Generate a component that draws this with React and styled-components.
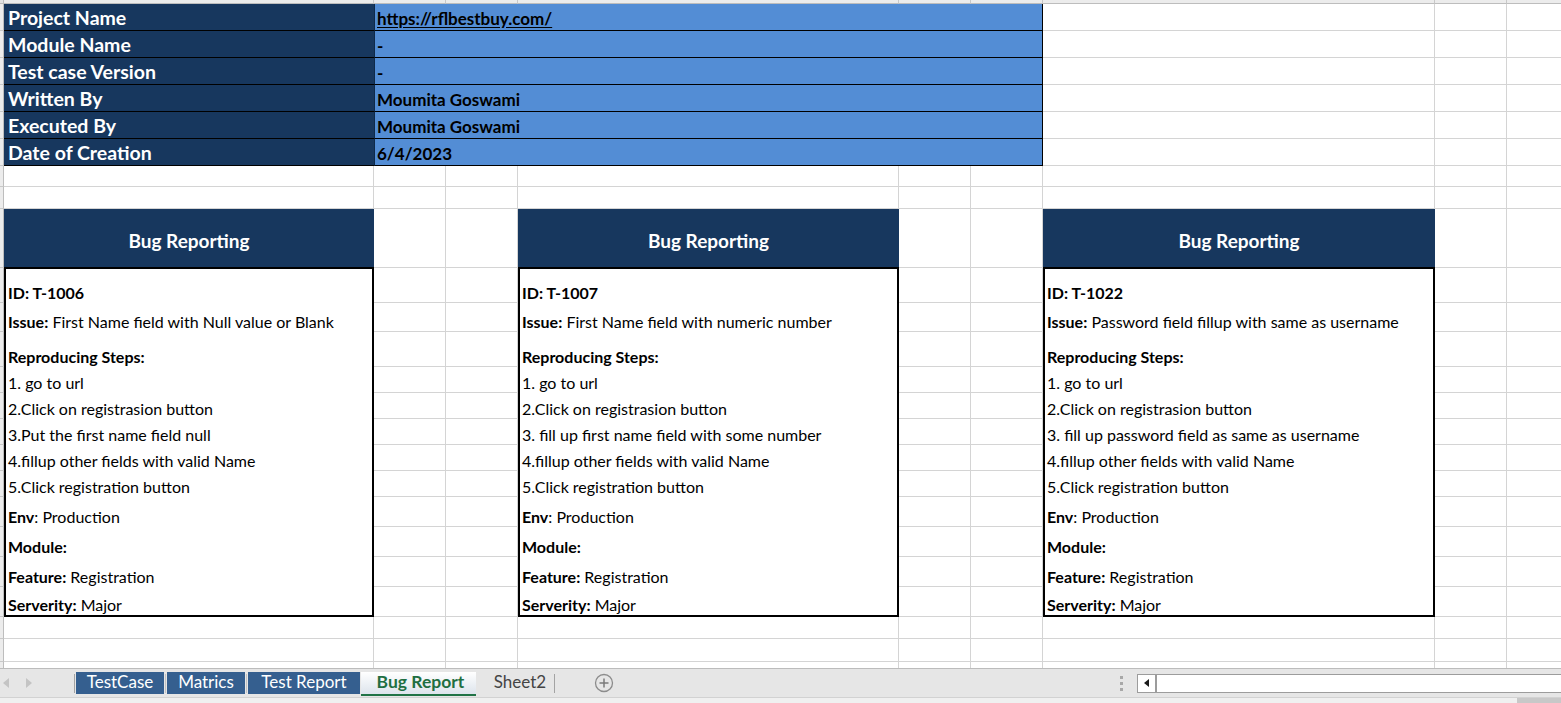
import React from 'react';
import styled, { createGlobalStyle } from 'styled-components';

const GlobalStyle = createGlobalStyle`
	html, body {
		margin: 0;
		padding: 0;
		background: #ffffff;
		font-family: Lato, 'Open Sans', sans-serif;
	}
`;

const navy = '#17375e';
const skyBlue = '#538dd5';
const gridLine = '#d4d4d4';

// column widths and row heights of the visible sheet (first is the header stub)
const colWidths = [4, 370, 72, 72, 381, 72, 72, 392, 72, 72];
const rowHeights = [4, 27, 27, 27, 27, 27, 27, 21, 22, 59, 35, 29, 35, 26, 26, 26, 26, 26, 30, 30, 30, 30, 22, 23, 23];
const gridCols = colWidths.map(w => `${w}px`).join(' ');
const gridRows = rowHeights.map(h => `${h}px`).join(' ');

const info = [
	{ label: 'Project Name', value: 'https://rflbestbuy.com/', link: true },
	{ label: 'Module Name', value: '-' },
	{ label: 'Test case Version', value: '-' },
	{ label: 'Written By', value: 'Moumita Goswami' },
	{ label: 'Executed By', value: 'Moumita Goswami' },
	{ label: 'Date of Creation', value: '6/4/2023' },
];

const bugs = [
	{
		col: 2,
		id: 'T-1006',
		issue: 'First Name field with Null value or Blank',
		steps: [
			'1. go to url',
			'2.Click on registrasion button',
			'3.Put the first name field null',
			'4.fillup other fields with valid Name',
			'5.Click registration button',
		],
	},
	{
		col: 5,
		id: 'T-1007',
		issue: 'First Name field with numeric number',
		steps: [
			'1. go to url',
			'2.Click on registrasion button',
			'3. fill up first name field with some number',
			'4.fillup other fields with valid Name',
			'5.Click registration button',
		],
	},
	{
		col: 8,
		id: 'T-1022',
		issue: 'Password field fillup with same as username',
		steps: [
			'1. go to url',
			'2.Click on registrasion button',
			'3. fill up password field as same as username',
			'4.fillup other fields with valid Name',
			'5.Click registration button',
		],
	},
];

const bodyRowHeights = [34, 29, 35, 26, 26, 26, 26, 26, 30, 30, 30, 28];

const tabs = [
	{ name: 'TestCase', w: 88 },
	{ name: 'Matrics', w: 78 },
	{ name: 'Test Report', w: 112 },
	{ name: 'Bug Report', w: 115, active: true },
	{ name: 'Sheet2', w: 76, plain: true },
];

function cellKind(r, c) {
	if (r === 0 && c === 0) return 'corner';
	if (r === 0) return 'colhead';
	if (c === 0) return 'rowhead';
	return 'cell';
}

function BugCard({ bug }) {
	const lines = [
		<Strong>ID: {bug.id}</Strong>,
		<>
			<Strong>Issue:</Strong> {bug.issue}
		</>,
		<Strong>Reproducing Steps:</Strong>,
		...bug.steps,
		<>
			<Strong>Env</Strong>: Production
		</>,
		<Strong>Module:</Strong>,
		<>
			<Strong>Feature:</Strong> Registration
		</>,
		<>
			<Strong>Serverity:</Strong> Major
		</>,
	];
	return (
		<Card $col={bug.col}>
			<CardHeader>Bug Reporting</CardHeader>
			<CardBody>
				{lines.map((line, i) => (
					<CardLine key={i} $h={bodyRowHeights[i]}>
						<span>{line}</span>
					</CardLine>
				))}
			</CardBody>
		</Card>
	);
}

export default function App() {
	return (
		<>
			<GlobalStyle />
			<Window>
				<SheetArea>
					<Layers>
						<GridLayer>
							{rowHeights.map((_, r) =>
								colWidths.map((__, c) => <GridCell key={`${r}-${c}`} $kind={cellKind(r, c)} />)
							)}
						</GridLayer>
						<ContentLayer>
							<InfoTable>
								{info.map(row => (
									<React.Fragment key={row.label}>
										<InfoLabel>{row.label}</InfoLabel>
										<InfoValue>{row.link ? <LinkText>{row.value}</LinkText> : row.value}</InfoValue>
									</React.Fragment>
								))}
							</InfoTable>
							{bugs.map(bug => (
								<BugCard key={bug.id} bug={bug} />
							))}
						</ContentLayer>
					</Layers>
				</SheetArea>

				<TabBar>
					<TabStrip>
						<NavArrows>
							<svg width="8" height="10" viewBox="0 0 8 10">
								<polygon points="7,0 7,10 1,5" fill="#c4c4c4" />
							</svg>
							<svg width="8" height="10" viewBox="0 0 8 10">
								<polygon points="1,0 1,10 7,5" fill="#c4c4c4" />
							</svg>
						</NavArrows>
						<TabSep $dark />
						{tabs.map((tab, i) => (
							<React.Fragment key={tab.name}>
								<Tab $w={tab.w} $active={tab.active} $plain={tab.plain}>
									{tab.name}
								</Tab>
								{i < tabs.length - 1 && !tabs[i + 1].active && !tab.active && <TabSep />}
							</React.Fragment>
						))}
						<TabSep $dark />
						<AddSheet>
							<svg width="20" height="20" viewBox="0 0 20 20">
								<circle cx="10" cy="10" r="8.5" fill="none" stroke="#8c8c8c" strokeWidth="1.3" />
								<line x1="10" y1="5.5" x2="10" y2="14.5" stroke="#7a7a7a" strokeWidth="1.5" />
								<line x1="5.5" y1="10" x2="14.5" y2="10" stroke="#7a7a7a" strokeWidth="1.5" />
							</svg>
						</AddSheet>
						<Spacer />
						<Grip>
							<i />
							<i />
							<i />
						</Grip>
						<HScroll>
							<ScrollButton>
								<svg width="8" height="10" viewBox="0 0 8 10">
									<polygon points="6,1 6,9 1,5" fill="#1a1a1a" />
								</svg>
							</ScrollButton>
							<ScrollTrack />
						</HScroll>
					</TabStrip>
					<StatusStrip>
						<ThumbStub />
					</StatusStrip>
				</TabBar>
			</Window>
		</>
	);
}

const Window = styled.div`
	width: 1561px;
	height: 703px;
	display: flex;
	flex-direction: column;
	overflow: hidden;
	background: #ffffff;
`;

const SheetArea = styled.div`
	flex: 1;
	overflow: hidden;
	min-height: 0;
`;

const Layers = styled.div`
	display: grid;
	grid-template-columns: max-content;
	& > * {
		grid-area: 1 / 1;
	}
`;

const GridLayer = styled.div`
	display: grid;
	grid-template-columns: ${gridCols};
	grid-template-rows: ${gridRows};
`;

const GridCell = styled.div`
	box-sizing: border-box;
	border-right: 1px solid ${gridLine};
	border-bottom: 1px solid ${gridLine};
	background: #ffffff;

	${p =>
		p.$kind === 'colhead' &&
		`
		background: #ececec;
		border-right-color: #c8c8c8;
		border-bottom-color: #bdbdbd;
	`}
	${p =>
		p.$kind === 'rowhead' &&
		`
		background: #ececec;
		border-right-color: #bdbdbd;
		border-bottom-color: #c8c8c8;
	`}
	${p =>
		p.$kind === 'corner' &&
		`
		background: #e2e2e2;
		border-color: #bdbdbd;
	`}
`;

const ContentLayer = styled.div`
	display: grid;
	grid-template-columns: ${gridCols};
	grid-template-rows: ${gridRows};
	pointer-events: none;
`;

const InfoTable = styled.div`
	grid-area: 2 / 2 / 8 / 8;
	display: grid;
	grid-template-columns: 370px 669px;
	grid-auto-rows: 27px;
	align-self: start;
`;

const InfoLabel = styled.div`
	box-sizing: border-box;
	display: flex;
	align-items: flex-end;
	padding: 0 0 0 4px;
	background: ${navy};
	border-bottom: 1px solid #000000;
	color: #ffffff;
	font-weight: 700;
	font-size: 19.5px;
	line-height: 24px;
	white-space: nowrap;
`;

const InfoValue = styled.div`
	box-sizing: border-box;
	display: flex;
	align-items: flex-end;
	padding: 0 0 1px 2px;
	background: ${skyBlue};
	border-bottom: 1px solid #000000;
	border-right: 1px solid #000000;
	border-left: 1px solid #0f2a4a;
	color: #000000;
	font-weight: 700;
	font-size: 17px;
	line-height: 21px;
	white-space: nowrap;
`;

const LinkText = styled.span`
	text-decoration: underline;
	text-underline-offset: 2px;
`;

const Card = styled.div`
	grid-column: ${p => p.$col};
	grid-row: 10 / 23;
	display: flex;
	flex-direction: column;
	height: 408px;
`;

const CardHeader = styled.div`
	height: 58px;
	box-sizing: border-box;
	display: flex;
	align-items: center;
	justify-content: center;
	padding-top: 5px;
	background: ${navy};
	color: #ffffff;
	font-weight: 700;
	font-size: 19px;
`;

const CardBody = styled.div`
	border: 2px solid #000000;
	background: #ffffff;
	display: flex;
	flex-direction: column;
`;

const CardLine = styled.div`
	height: ${p => p.$h}px;
	display: flex;
	align-items: flex-end;
	padding: 0 0 0 2px;
	box-sizing: border-box;
	font-size: 16px;
	line-height: 20px;
	color: #000000;
	white-space: nowrap;
`;

const Strong = styled.b`
	font-weight: 700;
`;

const TabBar = styled.div`
	height: 35px;
	flex: none;
	display: flex;
	flex-direction: column;
`;

const TabStrip = styled.div`
	height: 30px;
	box-sizing: border-box;
	border-top: 1px solid #bcbcbc;
	border-bottom: 1px solid #d2d2d2;
	background: #e6e6e6;
	display: flex;
	align-items: center;
`;

const NavArrows = styled.div`
	width: 73px;
	display: flex;
	align-items: center;
	gap: 15px;
	padding-left: 2px;
	box-sizing: border-box;
`;

const TabSep = styled.div`
	width: 1px;
	height: 19px;
	margin: 0 1px;
	background: ${p => (p.$dark ? '#a3a3a3' : '#c2c2c2')};
`;

const Tab = styled.div`
	width: ${p => p.$w}px;
	height: 22px;
	box-sizing: border-box;
	display: flex;
	align-items: center;
	justify-content: center;
	padding-bottom: 4px;
	font-size: 17px;
	color: #ffffff;
	background: #355f8f;
	white-space: nowrap;

	${p =>
		p.$active &&
		`
		margin: 0 1px;
		height: 24px;
		margin-top: 2px;
		padding: 0 0 3px 4px;
		font-size: 17.5px;
		background: linear-gradient(#ffffff, #dde4ec);
		color: #1f6f42;
		font-weight: 700;
		border-bottom: 2px solid #217346;
	`}
	${p =>
		p.$plain &&
		`
		background: transparent;
		color: #444444;
		padding-left: 10px;
	`}
`;

const AddSheet = styled.div`
	margin-left: 38px;
	display: flex;
	align-items: center;
`;

const Spacer = styled.div`
	flex: 1;
`;

const Grip = styled.div`
	display: flex;
	flex-direction: column;
	gap: 3px;
	margin-right: 14px;

	i {
		display: block;
		width: 3px;
		height: 3px;
		background: #a8a8a8;
	}
`;

const HScroll = styled.div`
	width: 424px;
	height: 19px;
	box-sizing: border-box;
	border: 1px solid #9c9c9c;
	border-right: none;
	background: #ffffff;
	display: flex;
`;

const ScrollButton = styled.div`
	width: 17px;
	border-right: 2px solid #9c9c9c;
	display: flex;
	align-items: center;
	justify-content: center;
`;

const ScrollTrack = styled.div`
	flex: 1;
`;

const StatusStrip = styled.div`
	flex: 1;
	background: #f0f0f0;
	display: flex;
	justify-content: flex-end;
`;

const ThumbStub = styled.div`
	width: 44px;
	background: #c8c8c8;
`;
